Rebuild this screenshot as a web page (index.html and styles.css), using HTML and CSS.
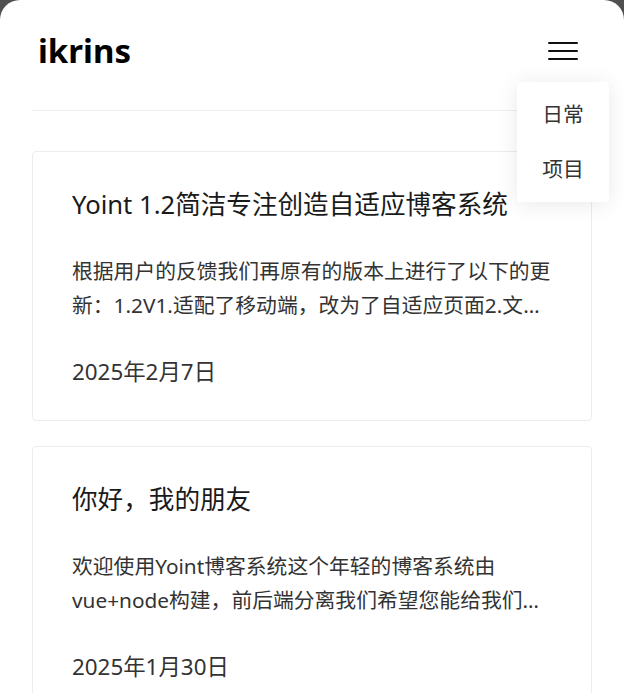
FILE: index.html
```html
<!DOCTYPE html>
<html lang="zh-CN">
<head>
    <meta charset="UTF-8">
    <meta name="viewport" content="width=device-width, initial-scale=1.0">
    <title>ikrins</title>
    <link rel="stylesheet" href="styles.css">
</head>
<body>
    <div class="page">
        <header class="topbar">
            <div class="logo">ikrins</div>
            <button class="menu-btn" aria-label="菜单">
                <span></span>
                <span></span>
                <span></span>
            </button>
        </header>
        <nav class="dropdown">
            <a href="#">日常</a>
            <a href="#">项目</a>
        </nav>
        <main class="list">
            <article class="card">
                <h2>Yoint 1.2简洁专注创造自适应博客系统</h2>
                <p class="summary">根据用户的反馈我们再原有的版本上进行了以下的更新：1.2V1.适配了移动端，改为了自适应页面2.文章列表与详情页的排版优化3.修复了若干已知问题</p>
                <div class="date">2025年2月7日</div>
            </article>
            <article class="card">
                <h2>你好，我的朋友</h2>
                <p class="summary">欢迎使用Yoint博客系统这个年轻的博客系统由vue+node构建，前后端分离我们希望您能给我们提出更多宝贵的意见与建议</p>
                <div class="date">2025年1月30日</div>
            </article>
        </main>
    </div>
</body>
</html>
```

FILE: styles.css
```css
body {
    margin: 0;
    padding: 0;
    background-color: #505050;
    font-family: "Noto Sans", "Noto Sans CJK SC", sans-serif;
}
.page {
    position: relative;
    background-color: white;
    border-radius: 20px 20px 0 0;
    min-height: 100vh;
}
.topbar {
    box-sizing: border-box;
    height: 111px;
    margin: 0 32px;
    padding: 0 14px 10px 6px;
    display: flex;
    align-items: center;
    justify-content: space-between;
    border-bottom: 1px solid #eeeef2;
}
.logo {
    font-size: 33px;
    font-weight: bold;
    color: #000;
}
.menu-btn {
    background: none;
    border: none;
    padding: 0;
    margin-top: 2px;
    width: 30px;
    display: flex;
    flex-direction: column;
    gap: 5.5px;
    cursor: pointer;
}
.menu-btn span {
    display: block;
    height: 2.5px;
    background-color: #111;
    border-radius: 2px;
}
.dropdown {
    position: absolute;
    top: 82px;
    right: 15px;
    width: 92px;
    padding: 5px 0;
    background-color: white;
    border-radius: 4px;
    box-shadow: 0 2px 22px rgba(0, 0, 0, 0.09);
    display: flex;
    flex-direction: column;
}
.dropdown a {
    height: 55px;
    line-height: 55px;
    text-align: center;
    font-size: 20.8px;
    color: #333;
    text-decoration: none;
}
.list {
    padding: 40px 32px 0;
    display: flex;
    flex-direction: column;
    gap: 25px;
}
.card {
    border: 1px solid #ececf0;
    border-radius: 4px;
    padding: 38px 39px 33px;
}
.card h2 {
    margin: 0 0 34px;
    font-size: 25.6px;
    font-weight: normal;
    line-height: 30px;
    color: #1a1a1a;
}
.summary {
    margin: 0 0 35px;
    font-size: 20.8px;
    line-height: 34px;
    color: #333;
    display: -webkit-box;
    -webkit-line-clamp: 2;
    -webkit-box-orient: vertical;
    overflow: hidden;
}
.date {
    font-size: 22.4px;
    line-height: 30px;
    color: #333;
}
```
